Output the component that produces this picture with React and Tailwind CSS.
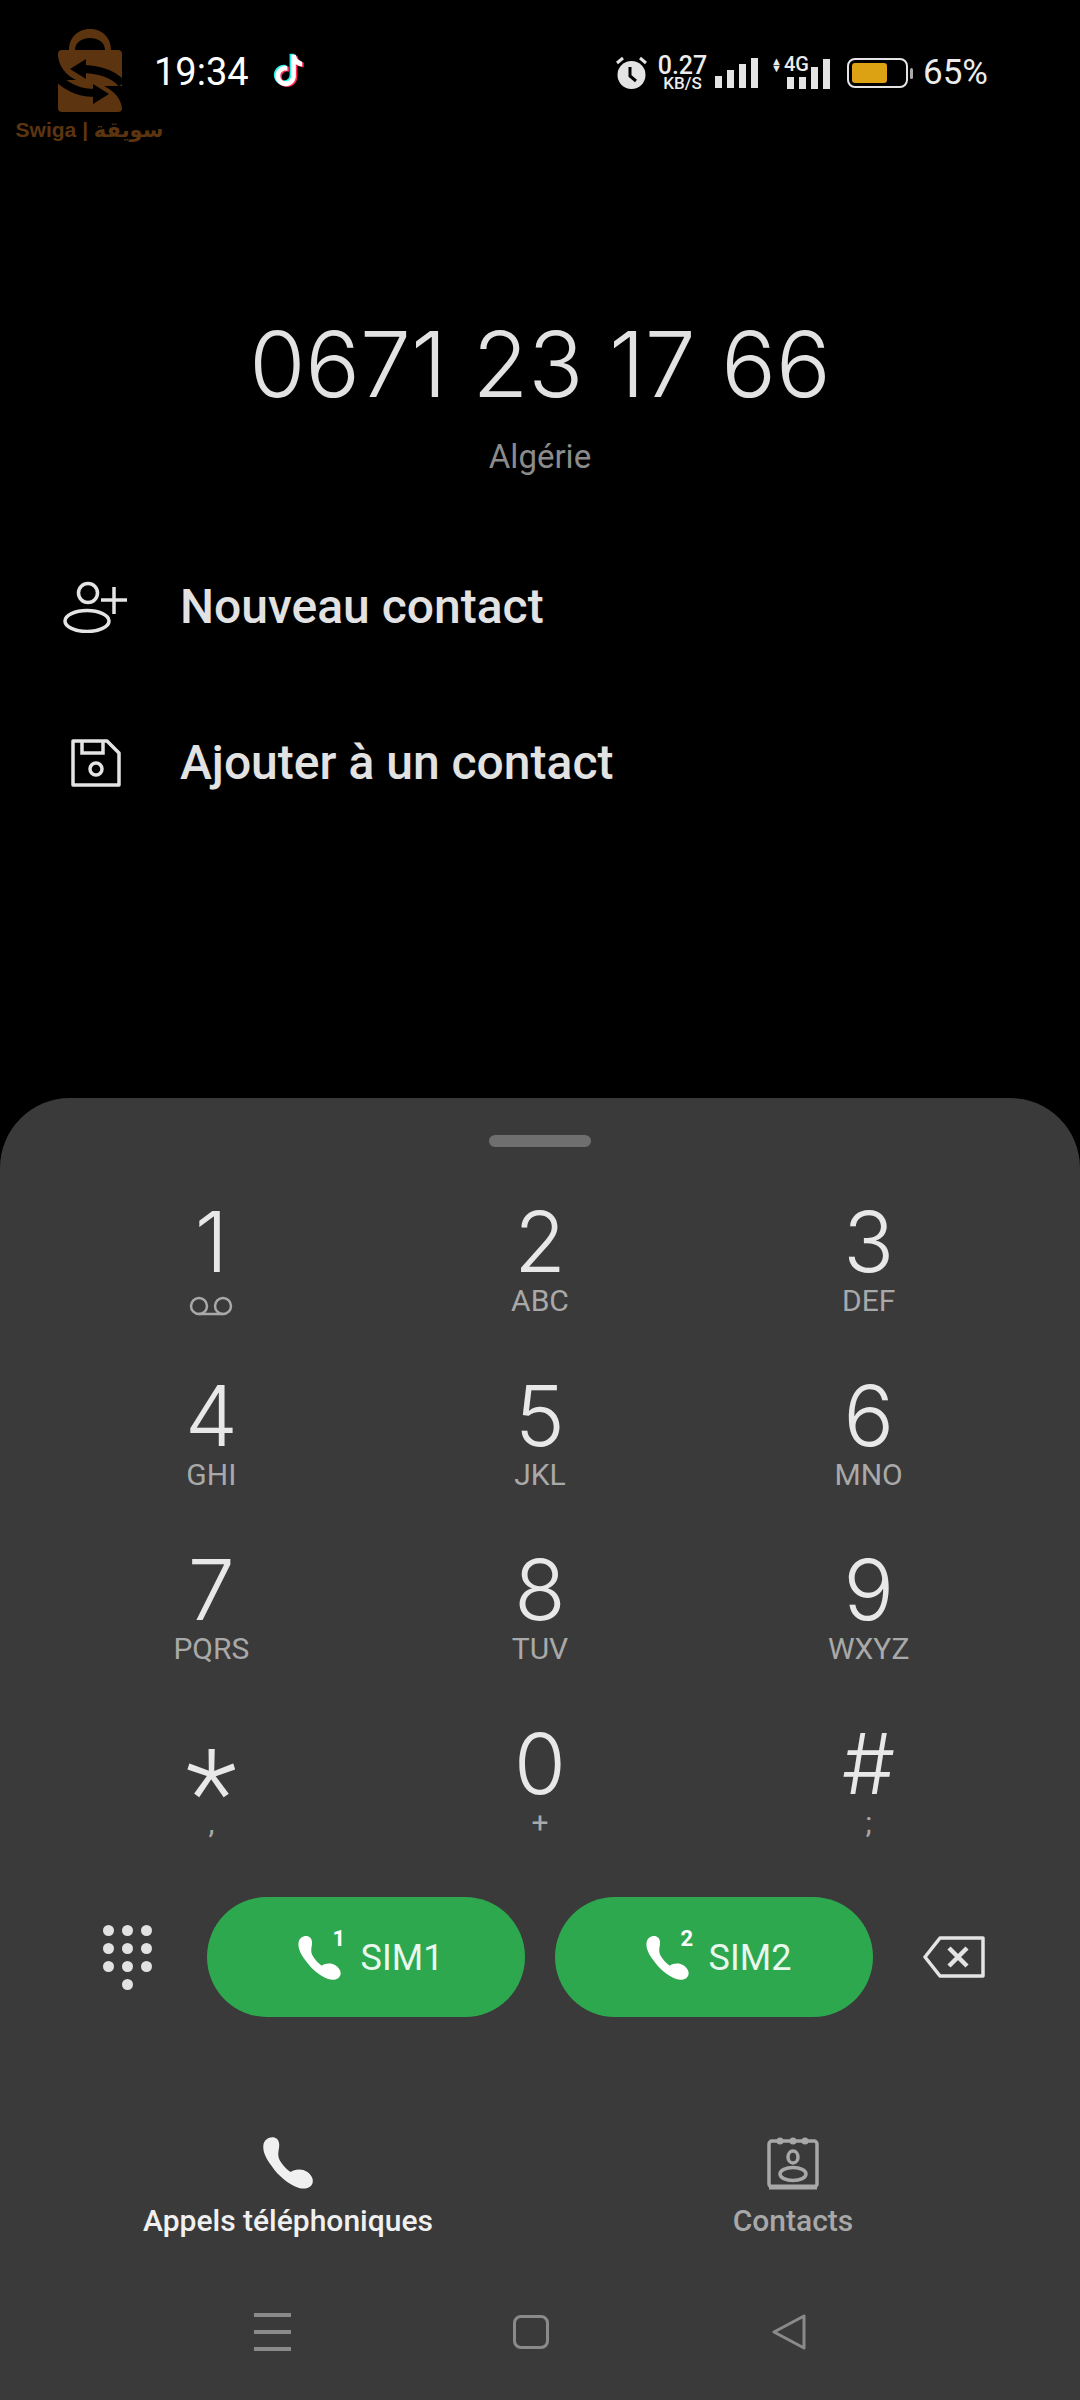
import React from 'react';

const keys = [
  ['1', null], ['2', 'ABC'], ['3', 'DEF'],
  ['4', 'GHI'], ['5', 'JKL'], ['6', 'MNO'],
  ['7', 'PQRS'], ['8', 'TUV'], ['9', 'WXYZ'],
  ['*', ','], ['0', '+'], ['#', ';'],
];

const phonePath = 'M40 48C42 30 60 20 75 25C88 30 90 45 86 62C84 75 84 85 92 97C100 110 110 120 122 128C130 122 145 118 160 122C178 128 192 145 188 160C184 175 165 182 145 175C115 165 85 140 65 110C50 90 38 70 40 48z';

function Phone({ className }) {
  return (
    <svg viewBox="36 20 156 162" className={className} fill="currentColor">
      <path d={phonePath} />
    </svg>
  );
}

function TikTok() {
  const d = 'M16 3h3c.3 2.400 1.800 4 4 4.400v3c-1.500 0-2.900-.5-4-1.300v7.400c0 3.700-3 6.500-6.500 6.500S6 20.200 6 16.500s3-6.500 6.500-6.500c.4 0 .8 0 1.100.1v3.200c-.4-.1-.7-.2-1.100-.2-1.900 0-3.400 1.500-3.400 3.400s1.500 3.400 3.400 3.400 3.500-1.500 3.500-3.400z';
  return (
    <svg viewBox="0 0 28 28" className="w-[44px] h-[44px] ml-[14px]">
      <path d={d} fill="#25f4ee" transform="translate(-1 -.6)" />
      <path d={d} fill="#fe2c55" transform="translate(1 .6)" />
      <path d={d} fill="#ffffff" />
    </svg>
  );
}

function Bars({ heights }) {
  return (
    <div className="flex items-end gap-[5px] h-[30px]">
      {heights.map((h, i) => (
        <div key={i} className="w-[7px] bg-[#e4e4e4]" style={{ height: h }} />
      ))}
    </div>
  );
}

function StatusBar() {
  return (
    <div className="relative h-[144px] text-[#ececec]">
      {/* watermark over the status bar */}
      <div className="absolute left-[16px] top-[28px] w-[147px] flex flex-col items-center">
        <svg viewBox="0 0 64 84" className="w-[64px] h-[84px]">
          <path d="M11 22C11-6 53-6 53 22h-6C47 6 17 6 17 22z" fill="#5c3510" />
          <rect x="0" y="22" width="64" height="62" rx="4" fill="#5c3510" />
          <path d="M0 28Q2 44 18 52L0 52z" fill="#000" />
          <path d="M64 80Q62 66 46 58L64 58z" fill="#000" />
          <path d="M24 41C40 41 56 46 64 56" stroke="#000" strokeWidth="8" fill="none" />
          <path d="M12 41L28 31V51z" fill="#000" />
          <path d="M0 50C10 60 24 65 38 65" stroke="#000" strokeWidth="8" fill="none" />
          <path d="M51 66L35 56V76z" fill="#000" />
        </svg>
        <div className="font-['Liberation_Sans','DejaVu_Sans',sans-serif] text-[21px] leading-[24px] font-bold text-[#5c3510] whitespace-nowrap mt-[6px]">
          Swiga | سويقة
        </div>
      </div>

      <div className="absolute left-[154px] top-[50px] flex items-center font-['Roboto',sans-serif]">
        <span className="text-[38px] leading-[44px] text-white w-[98px]">19:34</span>
        <TikTok />
      </div>

      <div className="absolute left-[616px] top-[55px] w-[372px] h-[36px] flex items-center">
        <svg viewBox="0 0 31 34" className="w-[31px] h-[34px]">
          <path d="M1 7l6-5M30 7l-6-5" stroke="#e4e4e4" strokeWidth="3" />
          <circle cx="15.500" cy="19" r="14" fill="#e4e4e4" />
          <path d="M14 11v9l6 5" stroke="#000" strokeWidth="3" fill="none" />
        </svg>
        <div className="ml-[11px] w-[49px] flex flex-col items-center font-['Roboto',sans-serif] font-medium">
          <span className="text-[25px] leading-[20px]">0.27</span>
          <span className="text-[17px] leading-[15px]">KB/S</span>
        </div>
        <div className="ml-[8px]"><Bars heights={[12, 18, 24, 30]} /></div>
        <div className="relative ml-[13px] w-[59px] h-[32px] flex justify-end items-end">
          <span className="absolute left-0 top-[1px] text-[11px] leading-[13px] font-['Liberation_Sans',sans-serif]">
            <span className="block h-[7px] leading-[7px]">▲</span>
            <span className="block h-[7px] leading-[7px]">▼</span>
          </span>
          <span className="absolute left-[13px] top-[-2px] text-[20px] leading-[18px] font-medium font-['Roboto',sans-serif]">4G</span>
          <Bars heights={[12, 12, 22, 30]} />
        </div>
        <div className="ml-[17px] w-[61px] h-[30px] rounded-[8px] border-2 border-[#e4e4e4] p-[3px]">
          <div className="w-[35px] h-full rounded-[3px] bg-[#dca214]" />
        </div>
        <div className="ml-[2px] w-[3px] h-[11px] rounded-full bg-[#aaa]" />
        <span className="ml-[10px] text-[35px] leading-[40px] font-['Roboto',sans-serif]">65%</span>
      </div>
    </div>
  );
}

function ContactRow({ icon, label, className }) {
  return (
    <div className={`flex items-center h-[60px] ${className}`}>
      <div className="w-[180px] flex justify-start pl-[63px]">{icon}</div>
      <span className="font-['Roboto',sans-serif] font-medium text-[48px] leading-[60px] text-[#e2e2e2]">{label}</span>
    </div>
  );
}

function Key({ digit, letters }) {
  const star = digit === '*';
  return (
    <div className="h-[174px] pt-[8px] flex flex-col items-center">
      <span className={`font-light leading-[62px] text-[#e8e8e8] ${star ? "font-['Roboto',sans-serif] text-[120px] translate-y-[30px]" : "font-['Inter',sans-serif] text-[84px]"}`}>{digit}</span>
      {letters ? (
        <span className="font-['Roboto',sans-serif] text-[30px] leading-[32px] text-[#a9a9a9] mt-[12px]">{letters}</span>
      ) : (
        <svg viewBox="0 0 44 20" className="w-[44px] h-[20px] mt-[23px]" fill="none" stroke="#a9a9a9" strokeWidth="2.500">
          <circle cx="10" cy="10" r="8" />
          <circle cx="34" cy="10" r="8" />
          <path d="M10 18h24" />
        </svg>
      )}
    </div>
  );
}

function SimButton({ n }) {
  return (
    <div className="w-[318px] h-[120px] rounded-full bg-[#2ea84f] flex items-center justify-center text-white">
      <div className="relative w-[72px] h-[60px]">
        <Phone className="w-[45px] h-[46px] absolute left-[8px] top-[8px]" />
        <span className="absolute left-[44px] top-[-1px] text-[22px] leading-[26px] font-bold font-['Roboto',sans-serif]">{n}</span>
      </div>
      <span className="font-['Roboto',sans-serif] text-[36px] leading-[44px] text-[#e9f7ec] mt-[2px]">SIM{n}</span>
    </div>
  );
}

export default function App() {
  return (
    <div className="w-[1080px] h-[2400px] bg-black flex flex-col overflow-hidden font-['Roboto',sans-serif]">
      <StatusBar />

      <div className="flex-1">
        <div className="mt-[170px] text-center font-['Inter',sans-serif] font-light text-[91px] leading-[100px] text-[#e2e2e2]">
          0671 23 17 66
        </div>
        <div className="mt-[23px] text-center text-[33px] leading-[40px] text-[#8b8b8b]">Algérie</div>

        <ContactRow
          className="mt-[100px]"
          label="Nouveau contact"
          icon={
            <svg viewBox="0 0 66 52" className="w-[66px] h-[52px]" fill="none" stroke="#e4e4e4" strokeWidth="3.500">
              <circle cx="25" cy="12" r="9.500" />
              <ellipse cx="24" cy="40" rx="22" ry="10.500" />
              <path d="M38 19h26M51 6v27" />
            </svg>
          }
        />
        <ContactRow
          className="mt-[96px]"
          label="Ajouter à un contact"
          icon={
            <div className="pl-[8px]">
              <svg viewBox="0 0 50 48" className="w-[50px] h-[48px]" fill="none" stroke="#e4e4e4" strokeWidth="3.500">
                <path d="M2 2h34l12 12v32H2z" strokeLinejoin="round" />
                <path d="M11 2v12h21V2" />
                <circle cx="25" cy="30" r="6" />
              </svg>
            </div>
          }
        />
      </div>

      <div className="h-[1302px] bg-[#3a3a3a] rounded-t-[70px] flex flex-col">
        <div className="mt-[37px] mx-auto w-[102px] h-[12px] rounded-full bg-[#6f6f6f]" />

        <div className="mt-[56px] px-[47px] grid grid-cols-3">
          {keys.map(([d, l]) => <Key key={d} digit={d} letters={l} />)}
        </div>

        <div className="-mt-[2px] flex items-center h-[120px]">
          <div className="w-[207px] flex justify-center pl-[48px]">
            <div className="grid grid-cols-3 gap-x-[8px] gap-y-[7px] w-[50px]">
              {[0, 1, 2, 3, 4, 5, 6, 7, 8].map(i => (
                <div key={i} className="w-[11px] h-[11px] rounded-full bg-[#e2e2e2]" />
              ))}
              <div className="col-start-2 w-[11px] h-[11px] rounded-full bg-[#e2e2e2]" />
            </div>
          </div>
          <div className="flex gap-[30px]">
            <SimButton n={1} />
            <SimButton n={2} />
          </div>
          <svg viewBox="0 0 62 42" className="w-[62px] h-[42px] ml-[50px]" fill="none" stroke="#e4e4e4" strokeWidth="3.500" strokeLinejoin="round">
            <path d="M17 2h43v38H17L2 21z" />
            <path d="M26 12l18 18M44 12L26 30" strokeWidth="4.500" />
          </svg>
        </div>

        <div className="mt-[118px] flex">
          <div className="ml-[143px] w-[290px] flex flex-col items-center text-[#f0f0f0]">
            <div className="h-[56px] flex items-center justify-center">
              <Phone className="w-[52px] h-[54px]" />
            </div>
            <span className="mt-[12px] text-[30px] leading-[36px] font-medium whitespace-nowrap">Appels téléphoniques</span>
          </div>
          <div className="ml-[299px] w-[122px] flex flex-col items-center text-[#a8a8a8]">
            <svg viewBox="0 0 52 56" className="w-[52px] h-[56px]" fill="none" stroke="#a8a8a8" strokeWidth="3.500">
              <rect x="2" y="6" width="48" height="46" rx="3" />
              <path d="M2 52h48" strokeWidth="5" />
              <circle cx="13" cy="6" r="3.500" fill="#a8a8a8" stroke="none" />
              <circle cx="26" cy="6" r="3.500" fill="#a8a8a8" stroke="none" />
              <circle cx="38" cy="6" r="3.500" fill="#a8a8a8" stroke="none" />
              <ellipse cx="26" cy="22" rx="5" ry="6" />
              <ellipse cx="26" cy="39" rx="13" ry="6.500" />
            </svg>
            <span className="mt-[12px] text-[30px] leading-[36px] font-medium">Contacts</span>
          </div>
        </div>

        <div className="mt-[75px] flex items-center h-[36px]">
          <div className="ml-[254px] w-[37px] flex flex-col gap-[13px]">
            <div className="h-[4px] bg-[#8a8a8a]" />
            <div className="h-[4px] bg-[#8a8a8a]" />
            <div className="h-[4px] bg-[#8a8a8a]" />
          </div>
          <div className="ml-[222px] w-[36px] h-[34px] rounded-[8px] border-[3px] border-[#8a8a8a]" />
          <svg viewBox="0 0 34 36" className="ml-[223px] w-[34px] h-[36px]" fill="none" stroke="#8a8a8a" strokeWidth="3" strokeLinejoin="round">
            <path d="M32 2v32L2 18z" />
          </svg>
        </div>
      </div>
    </div>
  );
}
